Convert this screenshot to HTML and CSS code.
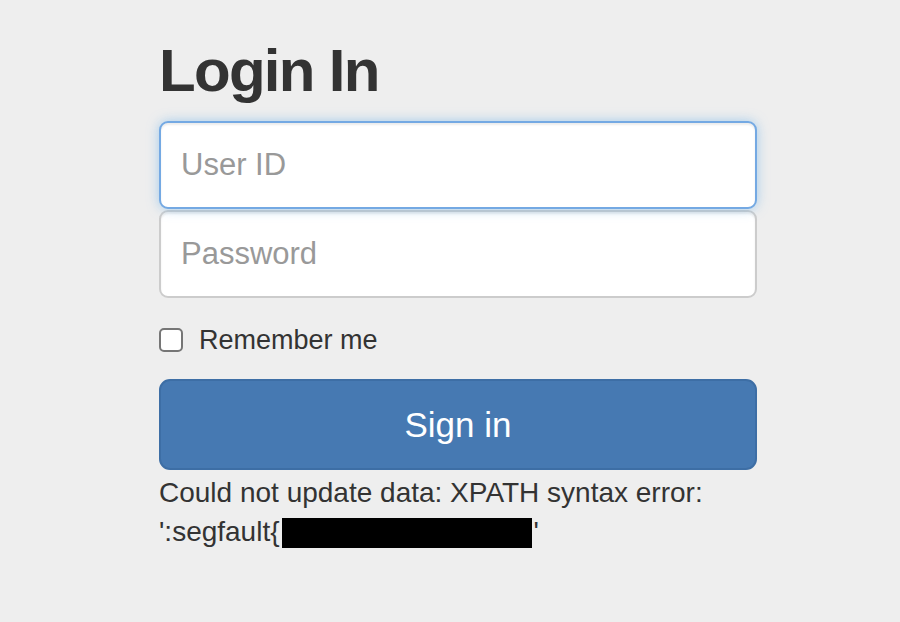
FILE: index.html
```html
<!DOCTYPE html>
<html lang="en">
<head>
<meta charset="utf-8">
<title>Login In</title>
<link rel="stylesheet" href="styles.css">
</head>
<body>
<form class="signin">
  <h2 class="signin-heading">Login In</h2>
  <input class="field field-focus" type="text" placeholder="User ID" autofocus>
  <input class="field field-second" type="password" placeholder="Password">
  <label class="remember">
    <span class="box"></span>
    <span class="remember-text">Remember me</span>
  </label>
  <button class="btn" type="button">Sign in</button>
  <p class="error">Could not update data: XPATH syntax error: ':segfault{<span class="redact"></span>'</p>
</form>
</body>
</html>
```
FILE: styles.css
```css
html, body {
  margin: 0;
  padding: 0;
  background: #eeeeee;
}
body {
  font-family: "Liberation Sans", Arial, sans-serif;
  color: #333333;
}
.signin {
  width: 598px;
  margin-left: 159px;
  padding-top: 38px;
  display: flex;
  flex-direction: column;
}
.signin-heading {
  margin: 0 0 17px 0;
  font-size: 60px;
  line-height: 66px;
  font-weight: 700;
  letter-spacing: -1.7px;
  color: #333333;
}
.field {
  box-sizing: border-box;
  width: 598px;
  height: 88px;
  margin: 0;
  padding: 0 20px;
  border: 2px solid #cccccc;
  border-radius: 9px;
  background: #ffffff;
  font-family: "Liberation Sans", Arial, sans-serif;
  font-size: 31px;
  color: #555555;
  outline: none;
  box-shadow: inset 0 2px 2px rgba(0,0,0,0.075);
}
.field::placeholder {
  color: #999999;
}
.field-focus {
  border-color: #74a9e3;
  box-shadow: inset 0 2px 2px rgba(0,0,0,0.075), 0 0 12px rgba(102,175,233,0.55);
  position: relative;
  z-index: 2;
  caret-color: #333333;
}
.field-second {
  margin-top: 1px;
}
.remember {
  display: flex;
  align-items: center;
  gap: 16px;
  margin-top: 30px;
  height: 24px;
  font-size: 27px;
  color: #333333;
}
.box {
  box-sizing: border-box;
  width: 24px;
  height: 24px;
  border: 2px solid #767676;
  border-radius: 5px;
  background: #ffffff;
  flex: none;
}
.btn {
  box-sizing: border-box;
  width: 598px;
  height: 91px;
  margin-top: 27px;
  border: 2px solid #3d6ea5;
  border-radius: 11px;
  background: #4679b2;
  color: #ffffff;
  font-family: "Liberation Sans", Arial, sans-serif;
  font-size: 35px;
  padding: 0 0 0 0;
  line-height: 1;
}
.error {
  margin: 3px 0 0 0;
  font-size: 28px;
  line-height: 39px;
  color: #333333;
}
.redact {
  display: inline-block;
  width: 250px;
  height: 30px;
  margin-left: 2px;
  margin-right: 2px;
  background: #000000;
  vertical-align: -7px;
}
```
